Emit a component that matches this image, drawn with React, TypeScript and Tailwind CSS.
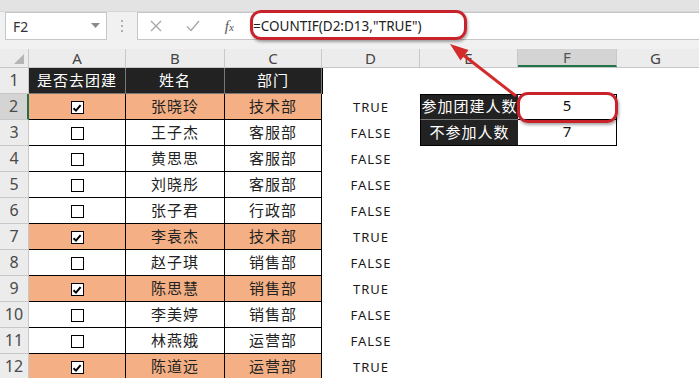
import React from "react";

const rows = [
  { c: true, n: "张晓玲", d: "技术部" },
  { c: false, n: "王子杰", d: "客服部" },
  { c: false, n: "黄思思", d: "客服部" },
  { c: false, n: "刘晓彤", d: "客服部" },
  { c: false, n: "张子君", d: "行政部" },
  { c: true, n: "李袁杰", d: "技术部" },
  { c: false, n: "赵子琪", d: "销售部" },
  { c: true, n: "陈思慧", d: "销售部" },
  { c: false, n: "李美婷", d: "销售部" },
  { c: false, n: "林燕娥", d: "运营部" },
  { c: true, n: "陈道远", d: "运营部" },
];

const cjk = { fontFamily: '"Noto Sans CJK SC", "Noto Sans", sans-serif' };
const sans = { fontFamily: '"Noto Sans", "Liberation Sans", sans-serif' };

function Check({ on }: { on: boolean }) {
  return (
    <div className="w-[13px] h-[13px] border-[1.5px] border-black bg-white flex items-center justify-center mb-[5px]">
      {on && (
        <svg width="10" height="10" viewBox="0 0 10 10">
          <path d="M1.5 5.2 L4 7.6 L8.6 2.2" fill="none" stroke="#000" strokeWidth="2" />
        </svg>
      )}
    </div>
  );
}

function RowHead({ n, sel }: { n: number; sel?: boolean }) {
  return (
    <div
      className={`w-[29px] h-full flex items-end justify-center pb-[1px] text-[16px] text-[#4a4a4a] border-b border-r border-[#c8c8c8] ${
        sel ? "bg-[#d4d4d4] border-r-[#217346] border-r-2" : "bg-[#ececec]"
      }`}
      style={sans}
    >
      {n}
    </div>
  );
}

export default function App() {
  return (
    <div className="relative w-[699px] h-[378px] overflow-hidden bg-white" style={sans}>
      {/* top strip */}
      <div className="h-[12px] bg-[#e3e3e3] border-b border-[#d6d6d6]" />
      {/* formula bar */}
      <div className="h-[28px] bg-[#f1f1f1] flex">
        <div className="ml-[5px] w-[102px] h-full bg-white border border-[#c6c6c6] flex items-center justify-between pl-[7px] pr-[6px]">
          <span className="text-[14px] text-[#333]">F2</span>
          <svg width="9" height="6" viewBox="0 0 9 6">
            <path d="M0 0 L9 0 L4.5 5 Z" fill="#8a8a8a" />
          </svg>
        </div>
        <div className="w-[30px] flex flex-col items-center justify-center gap-[3px]">
          <div className="w-[2px] h-[2px] bg-[#b0b0b0]" />
          <div className="w-[2px] h-[2px] bg-[#b0b0b0]" />
          <div className="w-[2px] h-[2px] bg-[#b0b0b0]" />
        </div>
        <div className="flex-1 h-full bg-white border-y border-l border-[#c6c6c6] flex items-center">
          <div className="w-[108px] flex items-center justify-around">
            <svg width="12" height="12" viewBox="0 0 12 12">
              <path d="M1 1 L11 11 M11 1 L1 11" stroke="#a8a8a8" strokeWidth="1.4" />
            </svg>
            <svg width="14" height="12" viewBox="0 0 14 12">
              <path d="M1 6.5 L5 10.5 L13 1" fill="none" stroke="#a8a8a8" strokeWidth="1.4" />
            </svg>
            <span className="text-[15px] italic text-[#555]" style={{ fontFamily: '"Liberation Serif", serif' }}>
              f<span className="text-[11px]">x</span>
            </span>
          </div>
          <span className="ml-[7px] text-[13.5px] text-[#222]" style={sans}>
            =COUNTIF(D2:D13,"TRUE")
          </span>
        </div>
      </div>
      <div className="h-[9px] bg-[#f1f1f1]" />
      {/* column headers */}
      <div className="h-[19px] flex bg-[#ececec] border-b border-[#c8c8c8] text-[15px] text-[#444]">
        <div className="w-[29px] border-r border-[#c8c8c8] flex items-end justify-end pr-[4px] pb-[3px]">
          <svg width="10" height="10" viewBox="0 0 10 10">
            <path d="M10 0 L10 10 L0 10 Z" fill="#b5b5b5" />
          </svg>
        </div>
        {[
          ["A", 97],
          ["B", 99],
          ["C", 97],
          ["D", 98],
          ["E", 98],
        ].map(([l, w]) => (
          <div
            key={l as string}
            className="border-r border-[#c8c8c8] flex items-center justify-center leading-none"
            style={{ width: w as number }}
          >
            {l}
          </div>
        ))}
        <div className="w-[99px] bg-[#d4d4d4] border-b-2 border-[#217346] border-r border-r-[#c8c8c8] flex items-center justify-center leading-none text-[#555]">
          F
        </div>
        <div className="flex-1 flex items-center justify-center leading-none pr-[5px]">G</div>
      </div>
      {/* row 1 */}
      <div className="h-[26px] flex">
        <RowHead n={1} />
        {[
          ["是否去团建", 97],
          ["姓名", 99],
          ["部门", 97],
        ].map(([t, w]) => (
          <div
            key={t as string}
            className="bg-[#222] text-white border-r border-b border-[#777] flex items-end justify-center pb-[2px] text-[15px] tracking-[1px]"
            style={{ width: w as number, ...cjk }}
          >
            {t}
          </div>
        ))}
        <div className="flex-1 border-l border-black" />
      </div>
      {rows.map((r, i) => {
        const bg = r.c ? "bg-[#f4b084]" : "bg-white";
        const rowNum = i + 2;
        return (
          <div key={i} className="h-[26px] flex">
            <RowHead n={rowNum} sel={rowNum === 2} />
            <div className={`w-[97px] ${bg} border-r border-b border-black flex items-end justify-center`}>
              <Check on={r.c} />
            </div>
            <div
              className={`w-[99px] ${bg} border-r border-b border-black flex items-end justify-center pb-[2px] text-[15px] tracking-[1px] text-[#222]`}
              style={cjk}
            >
              {r.n}
            </div>
            <div
              className={`w-[97px] ${bg} border-r border-b border-black flex items-end justify-center pb-[2px] text-[15px] tracking-[1px] text-[#222]`}
              style={cjk}
            >
              {r.d}
            </div>
            <div
              className="w-[98px] flex items-end justify-center pb-[3px] text-[13px] tracking-[1px] text-[#1a1a1a]"
              style={sans}
            >
              {r.c ? "TRUE" : "FALSE"}
            </div>
            {rowNum === 2 || rowNum === 3 ? (
              <>
                <div
                  className={`w-[98px] bg-[#222] text-white border-l border-black flex items-end justify-center pb-[2px] text-[15px] tracking-[1px] ${
                    rowNum === 2 ? "border-t border-b border-b-[#777]" : "border-b border-black"
                  }`}
                  style={cjk}
                >
                  {rowNum === 2 ? "参加团建人数" : "不参加人数"}
                </div>
                <div
                  className={`w-[99px] bg-white border-r border-b border-black flex items-end justify-center pb-[3px] text-[15px] text-[#111] ${
                    rowNum === 2 ? "border-t" : ""
                  }`}
                  style={sans}
                >
                  {rowNum === 2 ? "5" : "7"}
                </div>
              </>
            ) : null}
          </div>
        );
      })}

      {/* red highlight overlays */}
      <div className="absolute left-[250px] top-[10px] w-[217px] h-[30px] rounded-[11px] border-[3px] border-[#c8232c] shadow-[1px_2px_3px_rgba(0,0,0,0.35)]" />
      <div className="absolute left-[517px] top-[92px] w-[101px] h-[31px] rounded-[11px] border-[3px] border-[#c8232c] shadow-[1px_2px_3px_rgba(0,0,0,0.35)]" />
      <svg className="absolute left-0 top-0 pointer-events-none" width="699" height="378">
        <line x1="516" y1="96" x2="462" y2="54" stroke="#d42a2a" strokeWidth="3" />
        <polygon points="450,44 468.5,50 460.5,60.5" fill="#d42a2a" />
      </svg>
    </div>
  );
}
